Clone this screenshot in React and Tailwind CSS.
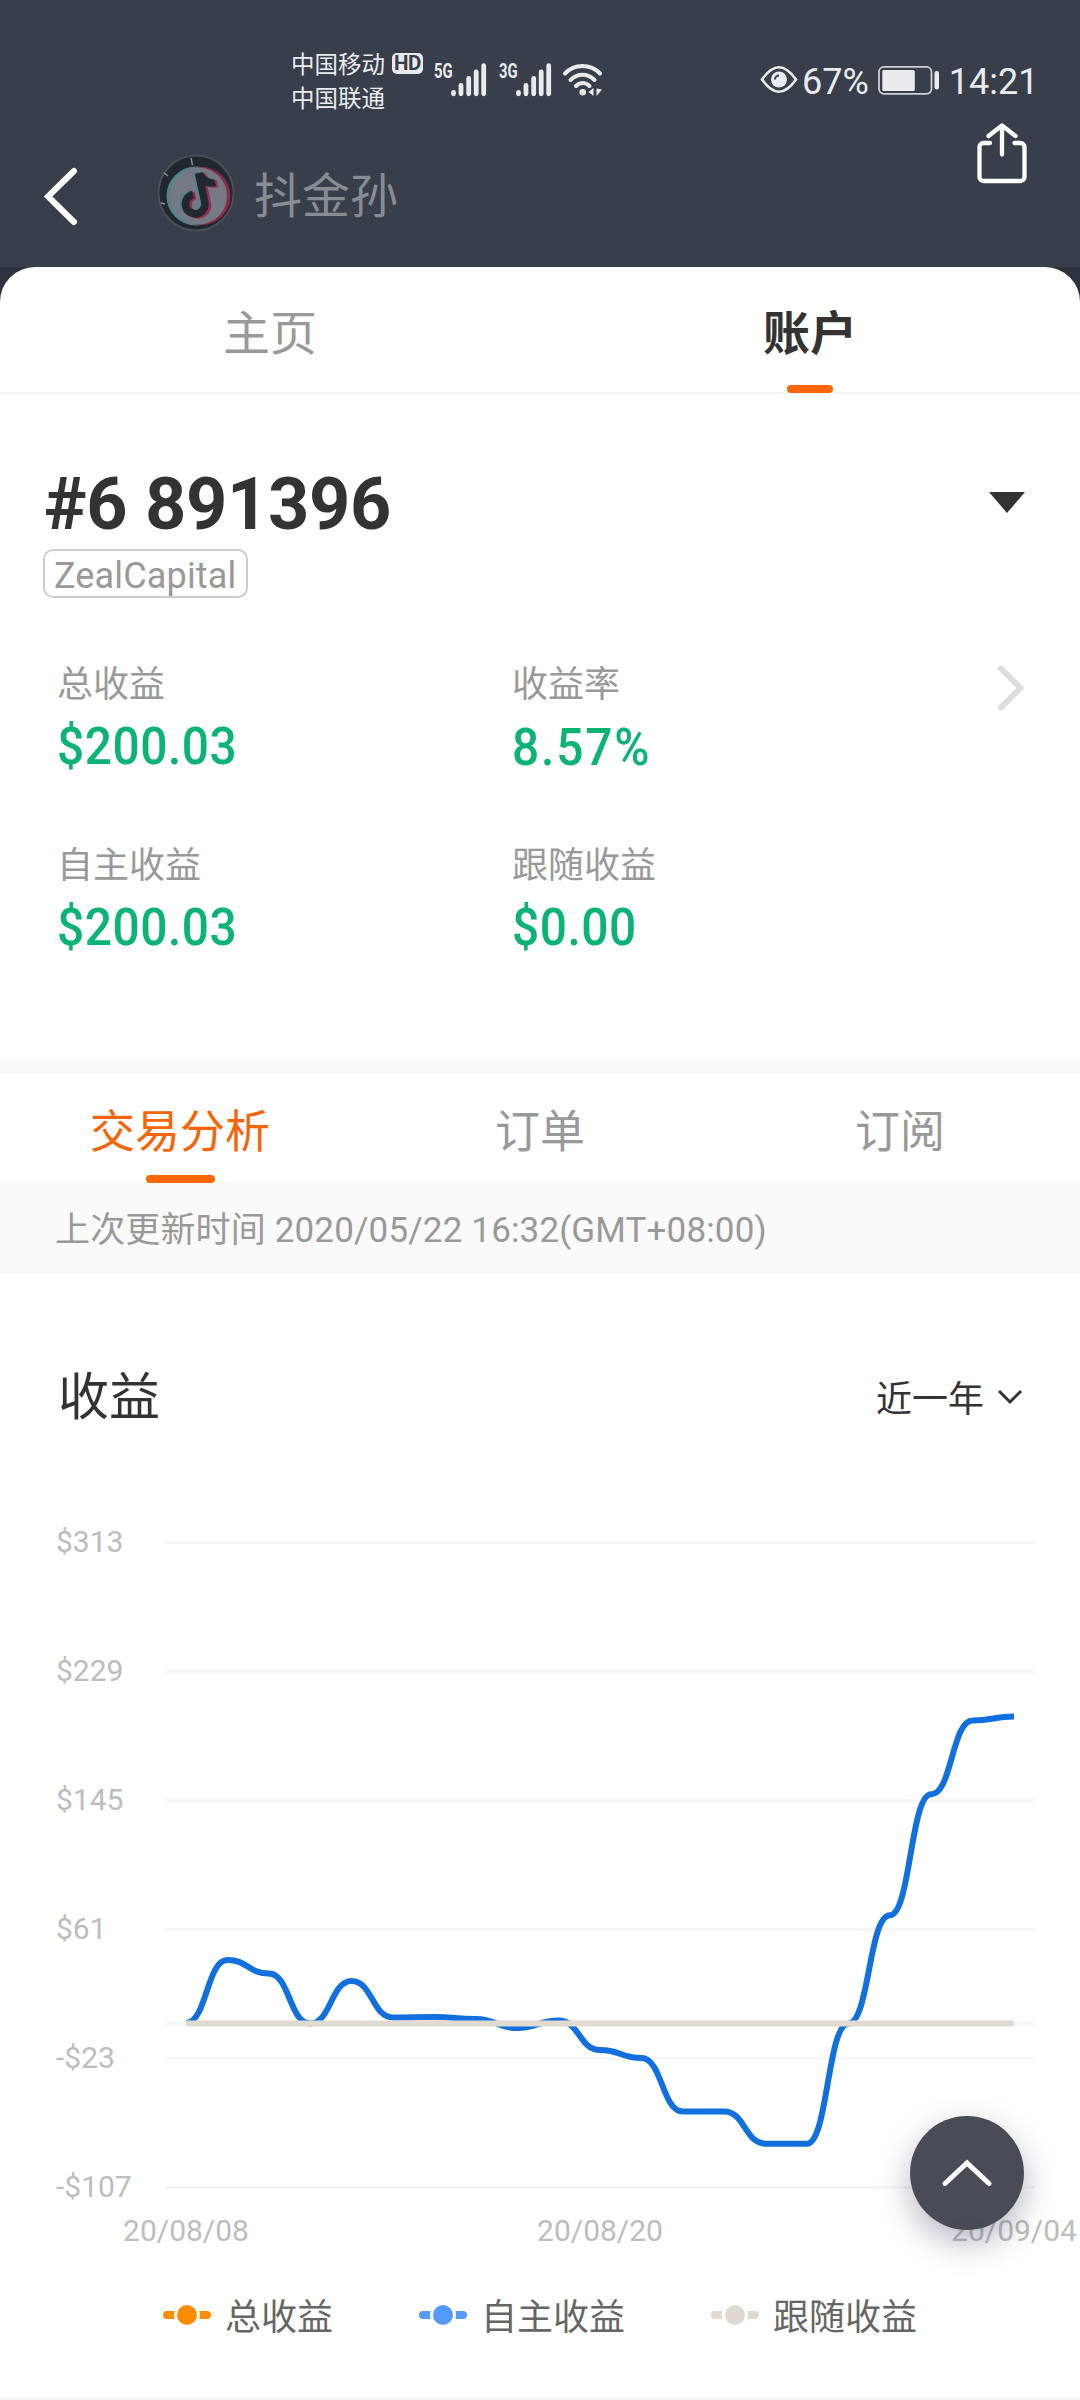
import clsx from 'clsx';

const stats = [
  { label: '总收益', value: '$200.03' },
  { label: '收益率', value: '8.57%', wide: true },
  { label: '自主收益', value: '$200.03' },
  { label: '跟随收益', value: '$0.00' },
];

const gridLines = [
  { y: 72, label: '$313' },
  { y: 201, label: '$229' },
  { y: 330, label: '$145' },
  { y: 459, label: '$61' },
  { y: 553 },
  { y: 588, label: '-$23' },
  { y: 717, label: '-$107' },
];

const dates = [
  { x: 186, label: '20/08/08' },
  { x: 600, label: '20/08/20' },
  { x: 1014, label: '20/09/04' },
];

const START_X = 186;
const STEP = 41.4;
const ZERO_Y = 553.5;

const profit = [
  553, 490, 503.5, 553.5, 511, 547.5, 547, 549, 558, 550.5, 580, 588, 641.5, 641.5, 673.7, 673.7,
  553.5, 445.2, 324.3, 250.4, 246.6,
];

const legend = [
  { label: '总收益', color: 'text-[#ff8c00]', margin: 'ml-[163px]' },
  { label: '自主收益', color: 'text-[#559af8]', margin: 'ml-[86px]' },
  { label: '跟随收益', color: 'text-[#e0d9cf]', margin: 'ml-[86px]' },
];

// every point keeps a flat tangent, half a step long on each side
function smoothPath(values) {
  const half = STEP / 2;
  return values
    .map((y, i) => {
      const x = START_X + i * STEP;
      if (i === 0) return `M${x} ${y}`;
      return `C${x - half} ${values[i - 1]} ${x - half} ${y} ${x} ${y}`;
    })
    .join(' ');
}

function Signal({ label }) {
  return (
    <div className="flex w-[65px] items-start">
      <span className="-ml-[1px] block w-[17px] origin-left scale-x-[0.74] text-[20px] leading-[16px] font-bold whitespace-nowrap">
        {label}
      </span>
      <svg width="36" height="34" viewBox="0 0 36 34" stroke="currentColor" strokeWidth="4.8" strokeLinecap="round">
        <path d="M2.5 29.5v1.3M10 22.5v8.3M17.7 15.5v15.3M25.2 9v21.8M32.7 2.7v28.1" />
      </svg>
    </div>
  );
}

function StatusBar() {
  return (
    <div className="flex h-[120px] items-start text-[#e9ebee]">
      <div className="mt-[48px] ml-[291px] w-[101px] text-[23.5px] leading-[34px]">
        <div>中国移动</div>
        <div>中国联通</div>
      </div>
      <div className="mt-[53px] flex h-[21px] w-[31px] items-center justify-center rounded-[5px] bg-[#e9ebee] text-[20.5px] leading-none font-bold tracking-[-0.5px] text-[#383e4a]">
        HD
      </div>
      <div className="mt-[63px] ml-[12px] flex">
        <Signal label="5G" />
        <Signal label="3G" />
      </div>
      <svg className="mt-[62px] -ml-[3px]" width="42" height="36" viewBox="0 0 42 36" fill="none" stroke="currentColor" strokeWidth="4" strokeLinecap="round">
        <path d="M3 11.5C12.5 1.5 28.5 1.5 38 11.5" />
        <path d="M8.5 18C15.5 11 25.5 11 32.5 18" />
        <path d="M14 24C18 20 23.5 20 27.5 24" />
        <circle cx="20.7" cy="30.3" r="3.3" fill="currentColor" stroke="none" />
        <path d="M26.5 30l5-4v8zM34.5 26.5v7.5l5.5-6.5z" fill="currentColor" stroke="none" />
      </svg>
      <svg className="mt-[65px] ml-[156px]" width="38" height="29" viewBox="0 0 38 29" fill="none" stroke="currentColor" strokeWidth="2.6">
        <path d="M2 14.5C8 6 13 2.3 19 2.3S30 6 36 14.5C30 23 25 26.7 19 26.7S8 23 2 14.5Z" />
        <circle cx="19" cy="14.5" r="8" fill="currentColor" stroke="none" />
        <path d="M15 14.5a4 4 0 0 1 4-4" stroke="#383e4a" strokeWidth="2" />
      </svg>
      <span className="mt-[61px] ml-[4px] text-[36px] leading-[42px]">67%</span>
      <svg className="mt-[65px] ml-[9px]" width="62" height="31" viewBox="0 0 62 31">
        <rect x="1" y="1.8" width="52.5" height="27" rx="5" fill="none" stroke="currentColor" strokeWidth="1.8" opacity="0.85" />
        <rect x="4.3" y="5" width="32.5" height="21" rx="1.5" fill="currentColor" />
        <rect x="56.5" y="6" width="4.5" height="18.5" rx="2" fill="currentColor" />
      </svg>
      <span className="mt-[61px] ml-[9px] text-[36px] leading-[42px]">14:21</span>
    </div>
  );
}

function Avatar() {
  const note = 'M198.5 173L204.5 201A9.8 9.8 0 1 1 193 194.5M199.5 174C203 181 208 184.5 215 182.5';
  return (
    <svg width="78" height="78" viewBox="157 154 78 78" fill="none">
      <circle cx="196" cy="193" r="37.5" fill="#20272f" stroke="#4a4f57" strokeWidth="2" />
      <path d="M191 158l1.5 7M164 173l4 3M161 203l4 1" stroke="#8b9199" strokeWidth="1.5" />
      <circle cx="196" cy="196" r="29.5" fill="#548489" />
      <circle cx="201.5" cy="196" r="29" fill="#8a2a48" />
      <circle cx="198.5" cy="196" r="28.5" fill="#747984" />
      <g strokeWidth="7.5">
        <path d={note} stroke="#548489" transform="translate(-2 -1)" />
        <path d={note} stroke="#962d4b" transform="translate(2.5 1)" />
        <path d={note} stroke="#20272f" />
      </g>
    </svg>
  );
}

function TitleBar() {
  return (
    <div className="flex h-[147px] items-start">
      <svg className="mt-[46px] ml-[43px]" width="36" height="62" viewBox="0 0 36 62" fill="none" stroke="#fff" strokeWidth="6" strokeLinecap="round">
        <path d="M31 5L5 30.5 31 56" />
      </svg>
      <div className="mt-[34px] ml-[78px]">
        <Avatar />
      </div>
      <span className="mt-[41px] ml-[19px] text-[48px] leading-[72px] text-[#888c93]">抖金孙</span>
      <svg className="mr-[52px] ml-auto" width="52" height="66" viewBox="0 0 52 66" fill="none" stroke="#fff" strokeWidth="4.3" strokeLinecap="round" strokeLinejoin="round">
        <path d="M14 23H7.5a4 4 0 0 0-4 4v30a4 4 0 0 0 4 4h37a4 4 0 0 0 4-4V27a4 4 0 0 0-4-4h-6" />
        <path d="M26 34.5V6M12.5 16L26 5.5 39.5 16" />
      </svg>
    </div>
  );
}

function MainTabs() {
  return (
    <div className="grid h-[127px] grid-cols-2 border-b-2 border-[#f7f7f7] text-[47px]">
      <div className="flex justify-center text-[#999]">
        <span className="mt-[31px] leading-[72px]">主页</span>
      </div>
      <div className="flex flex-col items-center font-bold text-[#333]">
        <span className="mt-[31px] leading-[72px]">账户</span>
        <span className="mt-[15px] h-[8px] w-[46px] shrink-0 rounded-[4px] bg-[#ff6500]" />
      </div>
    </div>
  );
}

function Account() {
  return (
    <div className="h-[666px] pt-[66px]">
      <div className="flex items-start justify-between pr-[55px] pl-[43px]">
        <div>
          <h1 className="h-[89px] pt-[3px] pl-[1px] text-[72px] leading-[84px] font-bold tracking-[-0.3px] text-[#333]">
            #6 891396
          </h1>
          <div className="inline-flex h-[49px] w-[205px] items-center rounded-[10px] border-2 border-[#ccc] pt-[5px] pl-[9px] text-[36px] leading-none tracking-[0.15px] text-[#999]">
            ZealCapital
          </div>
        </div>
        <svg className="mt-[32px]" width="36" height="22" viewBox="0 0 36 22">
          <path d="M0 0h36L18 21z" fill="#333" />
        </svg>
      </div>
      <div className="mt-[55px] flex items-start justify-between pr-[55px] pl-[57px]">
        <div className="grid grid-cols-[455px_300px]">
          {stats.map(({ label, value, wide }) => (
            <div key={label} className="h-[181px]">
              <div className="mt-[5px] text-[36px] leading-[54px] text-[#999]">{label}</div>
              <div
                className={clsx(
                  'w-fit origin-left scale-x-[0.92] text-[52px] leading-[62px] font-medium text-[#0bb374]',
                  wide ? 'mt-[5px] tracking-[2px]' : 'mt-[4px] tracking-[0.6px]'
                )}
              >
                {value}
              </div>
            </div>
          ))}
        </div>
        <svg className="mt-[12px]" width="28" height="46" viewBox="0 0 28 46" fill="none" stroke="#ddd" strokeWidth="6" strokeLinecap="round">
          <path d="M4 3.5L23.5 23 4 42.5" />
        </svg>
      </div>
    </div>
  );
}

function SubTabs() {
  return (
    <div className="grid h-[123px] grid-cols-3 border-t-[14px] border-[#fafafa] text-[45px] leading-[68px] text-[#999]">
      {['交易分析', '订单', '订阅'].map((tab, i) => (
        <div key={tab} className={clsx('flex flex-col items-center pt-[25px]', i === 0 && 'text-[#f56508]')}>
          {tab}
          {i === 0 && <span className="mt-[8px] h-[8px] w-[69px] rounded-[4px] bg-[#ff6500]" />}
        </div>
      ))}
    </div>
  );
}

function ProfitChart() {
  return (
    <svg className="block" width="1080" height="790" viewBox="0 0 1080 790" fontSize="30" fill="#bdbdbd">
      {gridLines.map(({ y, label }) => (
        <g key={y}>
          <path d={`M165 ${y + 0.5}H1035`} stroke="#f6f6f6" strokeWidth="3" />
          {label && (
            <text x="56" y={y + 10}>
              {label}
            </text>
          )}
        </g>
      ))}
      {dates.map(({ x, label }) => (
        <text key={x} x={x} y="771" textAnchor="middle">
          {label}
        </text>
      ))}
      <path d={smoothPath(profit)} fill="none" stroke="#1170de" strokeWidth="6" />
      <path d={`M${START_X} ${ZERO_Y}H1014`} stroke="#e0dad0" strokeWidth="6" />
    </svg>
  );
}

function LegendMark() {
  return (
    <svg width="48" height="24" viewBox="0 0 48 24" fill="currentColor">
      <rect y="8" width="48" height="8" rx="4" />
      <circle cx="24" cy="12" r="11.5" fill="#fff" stroke="#fff" strokeWidth="3" />
      <circle cx="24" cy="12" r="10" />
    </svg>
  );
}

export default function App() {
  return (
    <div className="relative h-[2400px] w-[1080px] overflow-hidden bg-[#383e4a] font-['Roboto','Noto_Sans_CJK_SC',sans-serif]">
      <StatusBar />
      <TitleBar />
      <div className="bg-[#2d343f]">
        <div className="flex h-[2133px] flex-col rounded-t-[35px] border-b-2 border-[#f3f3f3] bg-white">
          <MainTabs />
          <Account />
          <SubTabs />
          <div className="h-[91px] bg-[#fafafa] pl-[55px] text-[35px] leading-[96px] tracking-[0.15px] text-[#999]">
            上次更新时间 2020/05/22 16:32(GMT+08:00)
          </div>
          <div className="flex h-[196px] items-start pr-[57px] pl-[58px] text-[#333]">
            <h2 className="mt-[86px] text-[51px] leading-[76px]">收益</h2>
            <span className="mt-[99px] ml-auto text-[36px] leading-[54px]">近一年</span>
            <svg className="mt-[115px] ml-[13px]" width="26" height="16" viewBox="0 0 26 16" fill="none" stroke="currentColor" strokeWidth="3">
              <path d="M2 2l11 11L24 2" />
            </svg>
          </div>
          <ProfitChart />
          <div className="mt-[27px] flex h-[56px] items-center text-[36px] leading-[56px] text-[#666]">
            {legend.map(({ label, color, margin }) => (
              <div key={label} className={clsx('flex items-center', margin)}>
                <span className={color}>
                  <LegendMark />
                </span>
                <span className="ml-[14px] pt-[6px]">{label}</span>
              </div>
            ))}
          </div>
        </div>
      </div>
      <button className="absolute top-[2116px] left-[910px] flex h-[114px] w-[114px] items-center justify-center rounded-full bg-[#434552]/97 shadow-[0_12px_32px_rgba(50,50,80,0.35)]">
        <svg width="52" height="30" viewBox="0 0 52 30" fill="none" stroke="#fff" strokeWidth="5" strokeLinecap="round">
          <path d="M4 25.5L26 5l22 20.5" />
        </svg>
      </button>
    </div>
  );
}
